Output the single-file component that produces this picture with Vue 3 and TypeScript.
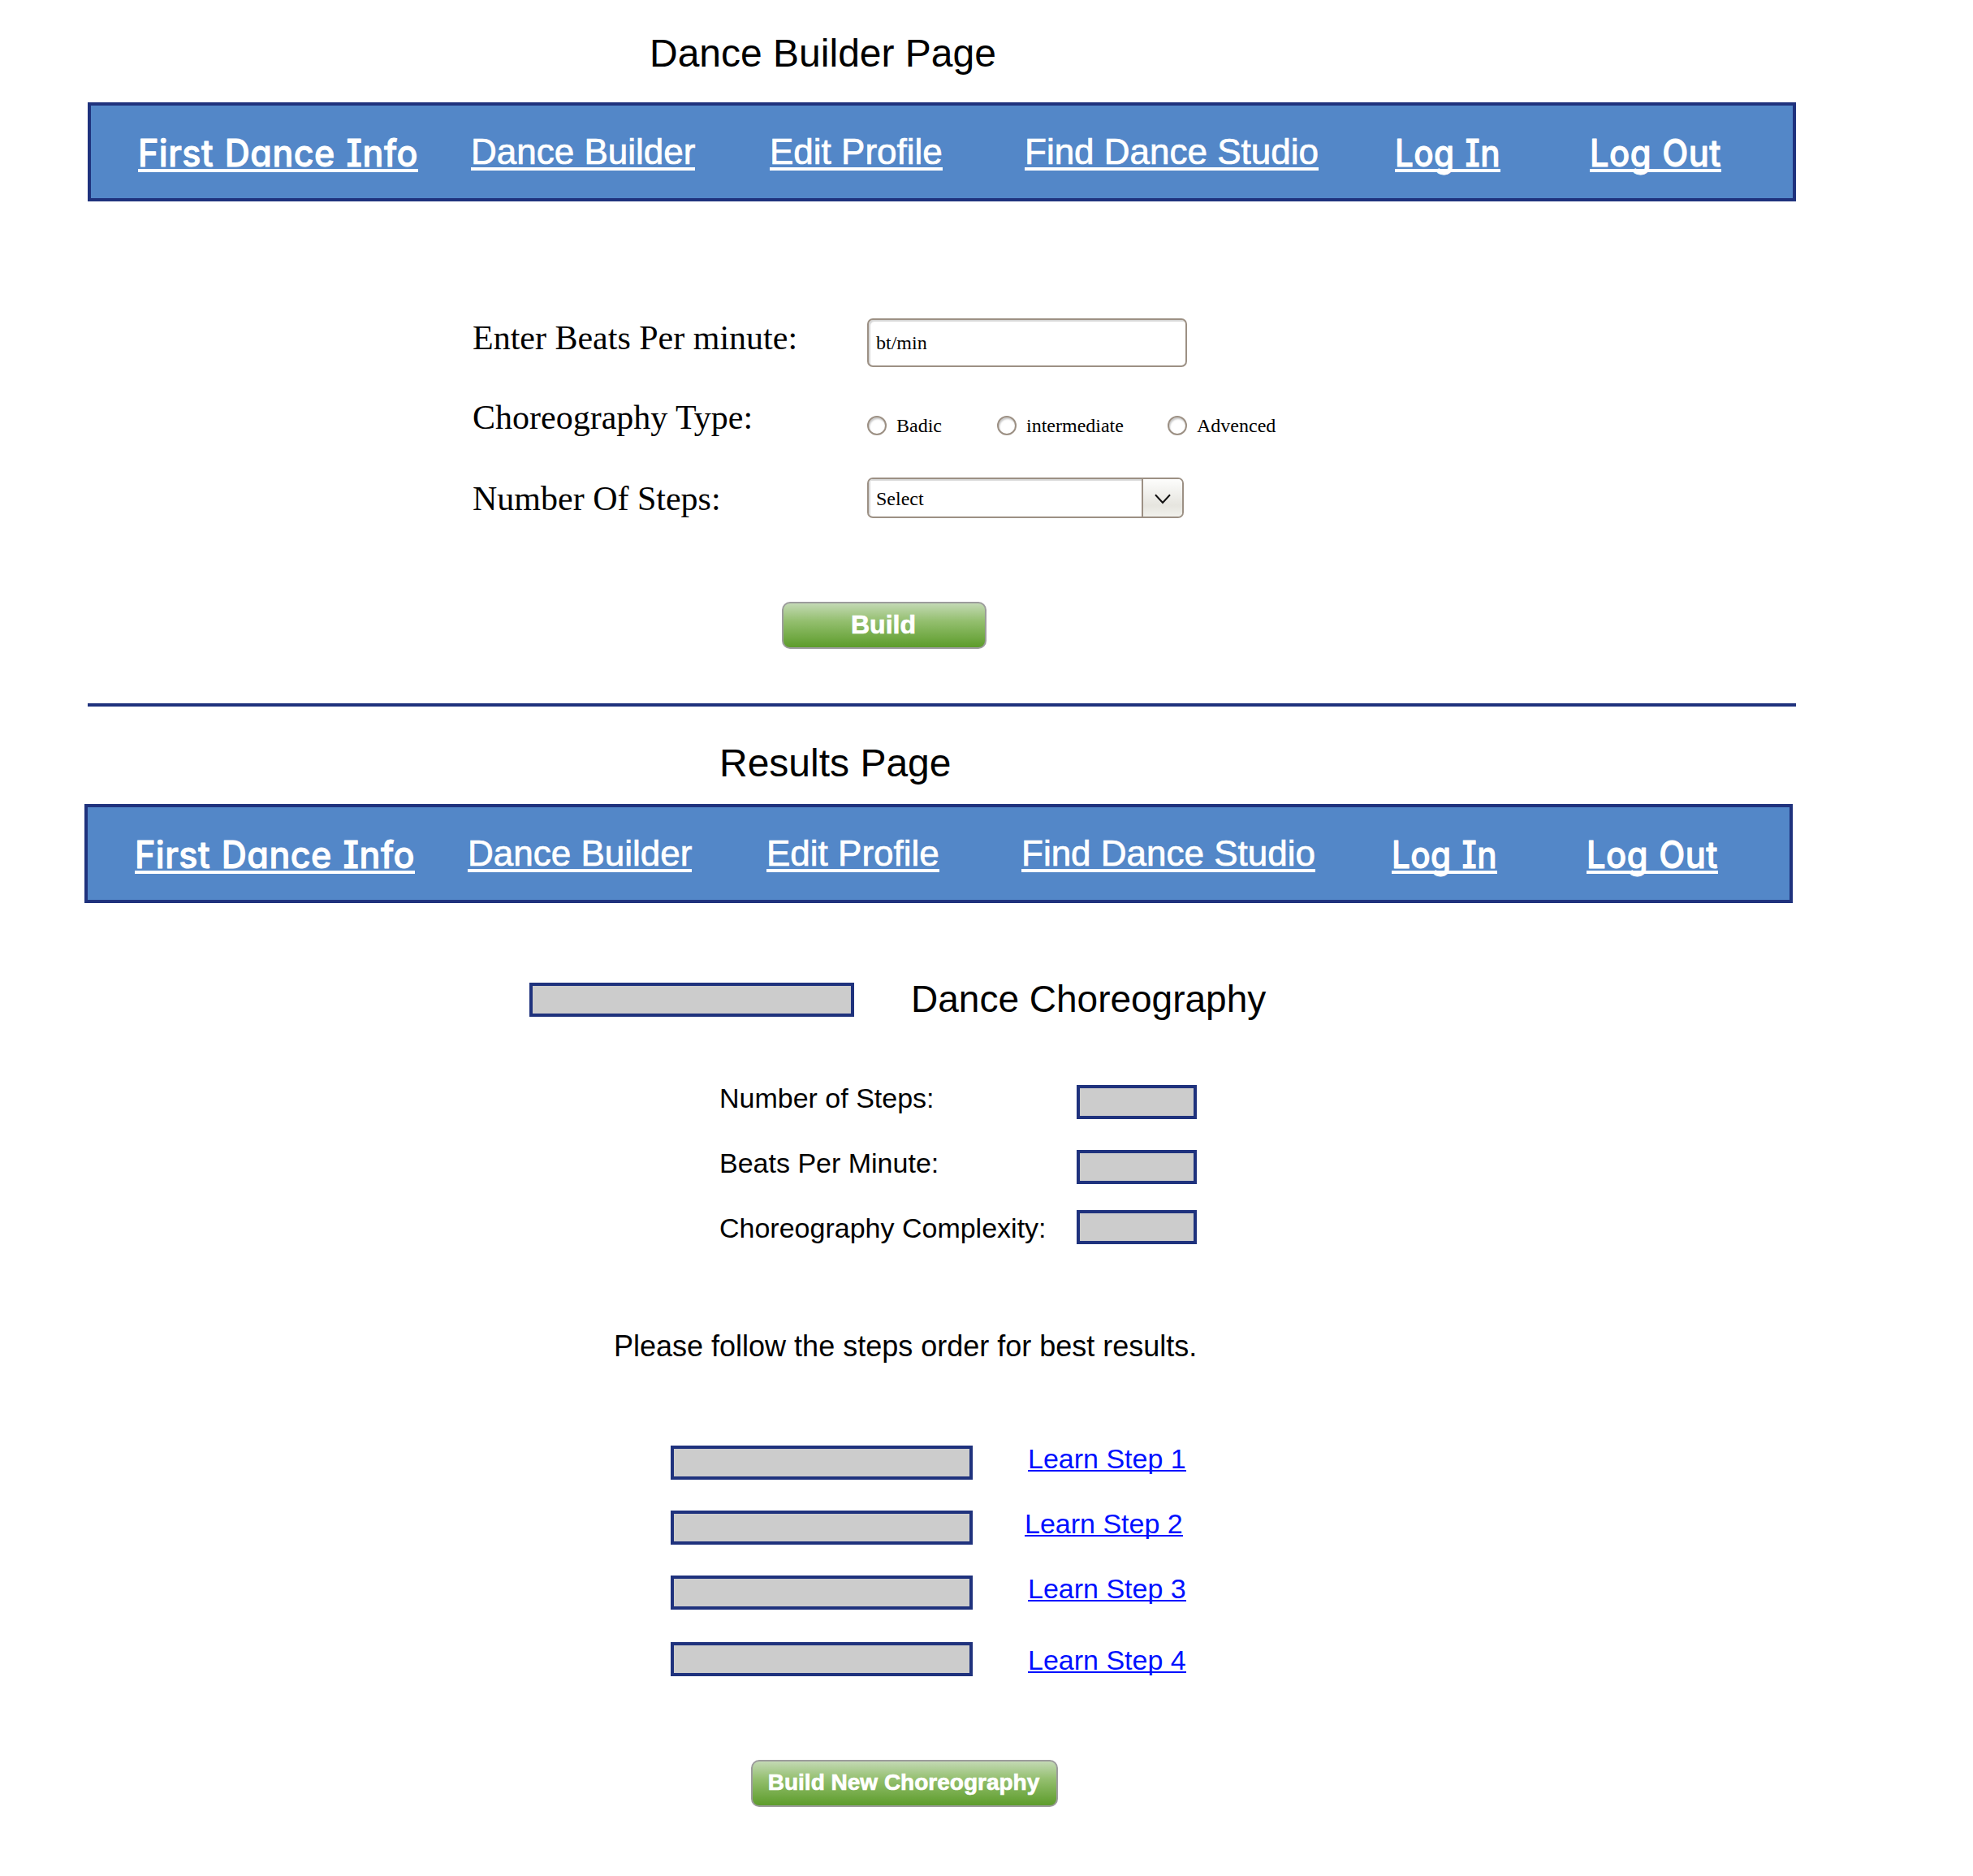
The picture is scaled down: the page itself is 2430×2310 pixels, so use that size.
<script setup lang="ts">
interface NavItem {
  label: string
  width: number
  casual: boolean
}

const navItems: NavItem[] = [
  { label: 'First Dance Info', width: 345, casual: true },
  { label: 'Dance Builder', width: 276, casual: false },
  { label: 'Edit Profile', width: 212, casual: false },
  { label: 'Find Dance Studio', width: 362, casual: false },
  { label: 'Log In', width: 130, casual: true },
  { label: 'Log Out', width: 162, casual: true },
]

const navBars: string[] = ['builder', 'results']
const levels: string[] = ['Badic', 'intermediate', 'Advenced']
const stats: string[] = ['Number of Steps:', 'Beats Per Minute:', 'Choreography Complexity:']
const steps: number[] = [1, 2, 3, 4]
</script>

<template>
  <main class="page">
    <section v-for="bar in navBars" :key="bar" :class="['screen', bar]">
      <h1 class="title">{{ bar === 'builder' ? 'Dance Builder Page' : 'Results Page' }}</h1>
      <nav class="nav">
        <a v-for="item in navItems" :key="item.label" :class="['nav-link', { casual: item.casual }]">
          <svg v-if="item.casual" :width="item.width" height="46">
            <text x="0" y="43" :textLength="item.width" lengthAdjust="spacingAndGlyphs">{{ item.label }}</text>
          </svg>
          <template v-else>{{ item.label }}</template>
        </a>
      </nav>

      <template v-if="bar === 'builder'">
        <form class="form">
          <div class="row beats">
            <span class="label">Enter Beats Per minute:</span>
            <div class="input">bt/min</div>
          </div>
          <div class="row type">
            <span class="label">Choreography Type:</span>
            <div class="radios">
              <span v-for="level in levels" :key="level" class="radio"><i class="dot"></i>{{ level }}</span>
            </div>
          </div>
          <div class="row count">
            <span class="label">Number Of Steps:</span>
            <div class="select">
              <span class="value">Select</span>
              <span class="arrow">
                <svg width="50" height="46" viewBox="0 0 50 46">
                  <path d="M15 19.2L24 29L33 19.2" fill="none" stroke="#111" stroke-width="2" />
                </svg>
              </span>
            </div>
          </div>
        </form>
        <div class="button build">Build</div>
        <div class="divider"></div>
      </template>

      <template v-else>
        <div class="dance">
          <div class="box"></div>
          <h2 class="dance-title">Dance Choreography</h2>
        </div>
        <div class="stats">
          <div v-for="stat in stats" :key="stat" class="stat">
            <span class="stat-label">{{ stat }}</span>
            <div class="box"></div>
          </div>
        </div>
        <p class="hint">Please follow the steps order for best results.</p>
        <div class="steps">
          <div v-for="step in steps" :key="step" class="step">
            <div class="box"></div>
            <a class="learn">Learn Step {{ step }}</a>
          </div>
        </div>
        <div class="button rebuild">Build New Choreography</div>
      </template>
    </section>
  </main>
</template>

<style>
body {
  margin: 0;
  background: #fff;
}
</style>

<style scoped>
.page {
  box-sizing: border-box;
  width: 2430px;
  height: 2310px;
  padding-top: 39px;
  background: #fff;
  color: #000;
  font-family: "Liberation Sans", Arial, sans-serif;
  white-space: nowrap;
  overflow: hidden;
}
.page * {
  box-sizing: border-box;
}
.title {
  margin: 0 0 34px 800px;
  font-size: 48px;
  line-height: 53px;
  font-weight: 400;
}
.results .title {
  margin: 43px 0 24px 886px;
}

/* Navigation bar */
.nav {
  display: grid;
  grid-template-columns: 410px 368px 314px 456px 240px 162px;
  align-items: start;
  justify-items: start;
  width: 2104px;
  height: 122px;
  margin-left: 108px;
  padding: 32px 0 0 58px;
  border: 4px solid #1f327d;
  background: #5387c8;
}
.results .nav {
  margin-left: 104px;
}
.nav-link {
  height: 48px;
  border-bottom: 4px solid #fff;
  color: #fff;
  font-size: 44px;
  line-height: 49px;
  -webkit-text-stroke: 0.7px #fff;
}
.casual {
  height: 50px;
  font-family: "Comic Sans MS", Inter, sans-serif;
  font-weight: 500;
  font-size: 46px;
  font-feature-settings: "cv08", "cv11";
  letter-spacing: 0.5px;
  word-spacing: 2px;
}
.casual svg {
  display: block;
  overflow: visible;
}
.casual text {
  fill: #fff;
  stroke: #fff;
  stroke-width: 1px;
  stroke-linejoin: round;
}

/* Builder form */
.form {
  margin: 144px 0 0 582px;
  font-family: "Liberation Serif", "Times New Roman", serif;
  font-size: 24px;
  line-height: 26px;
}
.row {
  display: flex;
  align-items: flex-start;
}
.label {
  width: 486px;
  font-size: 42px;
  line-height: 46px;
}
.beats {
  height: 60px;
}
.beats .label {
  padding-top: 1px;
}
.input {
  width: 394px;
  height: 60px;
  padding: 15px 0 0 9px;
  border: 2px solid #9c9084;
  border-radius: 7px;
  box-shadow: inset 2px 2px 1px #d8d8d8;
}
.type {
  height: 46px;
  margin-top: 39px;
}
.radios {
  display: grid;
  grid-template-columns: 160px 210px 140px;
  padding-top: 20px;
}
.radio {
  display: flex;
  height: 26px;
}
.dot {
  width: 24px;
  height: 24px;
  margin: 1px 12px 0 0;
  border: 2px solid #9c9084;
  border-radius: 50%;
  box-shadow: inset 1px 2px 2px #c8c8c8;
}
.count {
  height: 50px;
  margin-top: 51px;
}
.count .label {
  padding-top: 3px;
}
.select {
  display: flex;
  width: 390px;
  height: 50px;
  border: 2px solid #9c9084;
  border-radius: 7px;
  overflow: hidden;
}
.value {
  width: 336px;
  padding: 11px 0 0 9px;
  box-shadow: inset 2px 2px 1px #d8d8d8;
}
.arrow {
  width: 50px;
  flex: 1;
  border-left: 2px solid #9c9084;
  background: linear-gradient(#fdfdfc, #e6e5df 70%, #f1f1ec);
}
.arrow svg {
  display: block;
}

/* Buttons */
.button {
  height: 58px;
  border: 2px solid #9c9c9c;
  border-radius: 10px;
  background: linear-gradient(#c3d9b4, #94bf6f 40%, #5d9c2b);
  color: #fff;
  font-weight: 700;
  text-align: center;
  -webkit-text-stroke: 0.7px #fff;
}
.build {
  width: 252px;
  margin: 103px 0 0 963px;
  padding: 8px 2px 0 0;
  font-size: 32px;
  line-height: 36px;
}
.rebuild {
  width: 378px;
  margin: 103px 0 0 925px;
  padding: 10px 2px 0 0;
  font-size: 28px;
  line-height: 31px;
}
.divider {
  width: 2104px;
  height: 4px;
  margin: 67px 0 0 108px;
  background: #1f327d;
}

/* Results */
.box {
  height: 42px;
  border: 4px solid #1f327d;
  background: #ccc;
}
.dance {
  display: flex;
  align-items: flex-start;
  gap: 70px;
  height: 52px;
  margin: 92px 0 0 652px;
}
.dance .box {
  width: 400px;
  margin-top: 6px;
}
.dance-title {
  margin: 0;
  font-size: 46px;
  line-height: 52px;
  font-weight: 400;
}
.stats {
  margin: 77px 0 0 886px;
  font-size: 34px;
  line-height: 38px;
}
.stat {
  display: flex;
  align-items: flex-start;
  height: 45px;
  margin-bottom: 35px;
}
.stat-label {
  width: 440px;
}
.stat .box {
  width: 148px;
  margin-top: 3px;
}
.stat:last-child {
  height: 42px;
  margin: -3px 0 0;
}
.stat:last-child .stat-label {
  padding-top: 3px;
}
.stat:last-child .box {
  margin-top: 0;
}
.hint {
  margin: 105px 0 0 756px;
  font-size: 36px;
  line-height: 41px;
}
.steps {
  margin: 99px 0 0 826px;
}
.step {
  display: flex;
  align-items: flex-start;
  height: 45px;
  margin-bottom: 35px;
}
.step .box {
  width: 372px;
  margin-top: 3px;
}
.learn {
  height: 35px;
  margin-left: 68px;
  border-bottom: 2px solid #0010ff;
  color: #0010ff;
  font-size: 34px;
  line-height: 38px;
}
.step:nth-child(2) .learn {
  margin-left: 64px;
}
.step:last-child {
  height: 42px;
  margin: 40px 0 0;
}
.step:last-child .box {
  margin-top: 0;
}
.step:last-child .learn {
  margin-top: 3px;
}
</style>
